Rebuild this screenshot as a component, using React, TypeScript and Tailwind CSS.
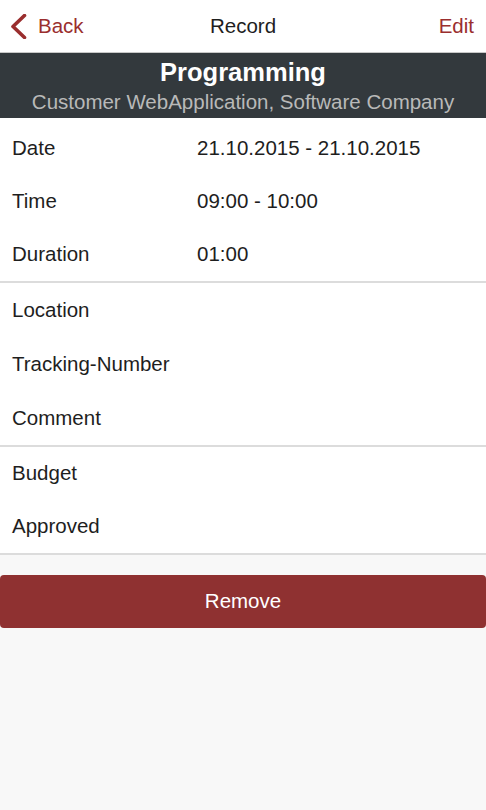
type Row = { label: string; value?: string };

const groups: Row[][] = [
  [
    { label: "Date", value: "21.10.2015 - 21.10.2015" },
    { label: "Time", value: "09:00 - 10:00" },
    { label: "Duration", value: "01:00" },
  ],
  [{ label: "Location" }, { label: "Tracking-Number" }, { label: "Comment" }],
  [{ label: "Budget" }, { label: "Approved" }],
];

export default function App() {
  return (
    <div className="flex min-h-[810px] flex-col bg-[#f8f8f8] font-['Liberation_Sans',Arial,sans-serif] text-[#1e1e1e]">
      <header className="relative flex h-[53px] items-center justify-between border-b border-[#c8c8c8] bg-white px-[10px]">
        <button type="button" className="flex items-center gap-[11px] text-[20.5px] text-[#9a2e2e]">
          <svg width="17" height="25" viewBox="0 0 17 25" fill="none" className="mt-[1px]">
            <polyline
              points="14.5,1.5 3,12.5 14.5,23.5"
              stroke="currentColor"
              strokeWidth="3.6"
              strokeLinecap="round"
              strokeLinejoin="round"
            />
          </svg>
          Back
        </button>
        <p className="absolute left-1/2 -translate-x-1/2 text-[20.5px]">Record</p>
        <button type="button" className="pr-[2px] text-[20.5px] text-[#9a2e2e]">
          Edit
        </button>
      </header>

      <div className="flex h-[65px] flex-col items-center justify-center bg-[#33393d] leading-tight">
        <p className="text-[25.5px] font-bold text-white">Programming</p>
        <p className="text-[20.5px] text-[#b9b9b9]">Customer WebApplication, Software Company</p>
      </div>

      <div className="bg-white pt-1">
        {groups.map((group, index) => (
          <div key={index} className="border-b-2 border-[#dcdcdc]">
            {group.map((row) => (
              <div
                key={row.label}
                className={`flex items-center px-[12px] text-[20.5px] ${index === 1 ? "h-[54px]" : "h-[53px]"}`}
              >
                <span className="w-[185px]">{row.label}</span>
                {row.value && <span>{row.value}</span>}
              </div>
            ))}
          </div>
        ))}
      </div>

      <div className="pt-[20px]">
        <button
          type="button"
          className="flex h-[53px] w-full items-center justify-center rounded-[4px] bg-[#8f3131] text-[20.5px] text-white"
        >
          Remove
        </button>
      </div>
    </div>
  );
}
